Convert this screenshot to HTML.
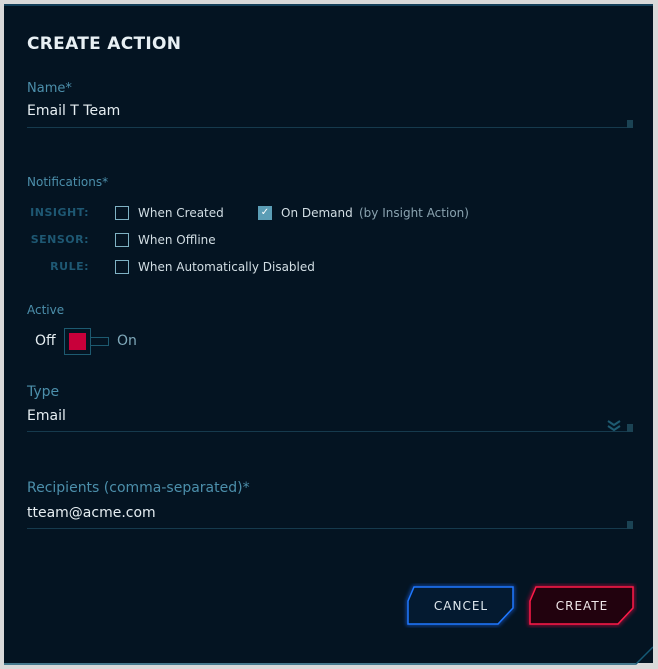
<!DOCTYPE html>
<html><head><style>
*{margin:0;padding:0;box-sizing:border-box}
body{width:658px;height:669px;background:#d9d9d9;font-family:"DejaVu Sans","Liberation Sans",sans-serif;position:relative;overflow:hidden}
.panel{position:absolute;left:4px;top:4px;width:649px;height:659px;background:#041422;border-top:2px solid #14405a}
.a{position:absolute;white-space:nowrap}
.lbl{color:#4c8fab;font-size:13px}
.val{color:#e6eef2;font-size:14px}
.line{position:absolute;left:23px;width:606px;height:1px;background:#163a4d}
.sq{position:absolute;width:6px;height:8px;background:#1b4354}
.cat{color:#1e5873;font-size:11px;font-weight:bold;letter-spacing:.5px;text-align:right;width:62px}
.cb{position:absolute;width:14px;height:14px;border:1px solid #7fb2c4}
.ct{color:#d2dee4;font-size:12px}
</style></head><body>
<div class="panel">
<div class="a" style="left:23px;top:28px;color:#e8f0f4;font-size:17px;font-weight:bold;letter-spacing:.3px">CREATE ACTION</div>
<div class="a lbl" style="left:23px;top:75px">Name*</div>
<div class="a val" style="left:23px;top:97px">Email T Team</div>
<div class="line" style="top:121px"></div><div class="sq" style="left:623px;top:114px"></div>

<div class="a lbl" style="left:23px;top:169px;font-size:12px">Notifications*</div>
<div class="a cat" style="left:23px;top:200px">INSIGHT:</div>
<div class="cb" style="left:111px;top:200px"></div>
<div class="a ct" style="left:134px;top:200px">When Created</div>
<div class="cb" style="left:254px;top:200px;background:#5b9db5;border-color:#5b9db5;color:#fff;font-size:10px;line-height:12px;text-align:center">✓</div>
<div class="a ct" style="left:277px;top:200px">On Demand</div>
<div class="a ct" style="left:355px;top:200px;color:#8aa3b0">(by Insight Action)</div>
<div class="a cat" style="left:23px;top:227px">SENSOR:</div>
<div class="cb" style="left:111px;top:227px"></div>
<div class="a ct" style="left:134px;top:227px">When Offline</div>
<div class="a cat" style="left:23px;top:254px">RULE:</div>
<div class="cb" style="left:111px;top:254px"></div>
<div class="a ct" style="left:134px;top:254px">When Automatically Disabled</div>

<div class="a lbl" style="left:23px;top:297px;font-size:12px">Active</div>
<div class="a val" style="left:31px;top:327px;font-size:14px">Off</div>
<div class="a" style="left:60px;top:322px;width:27px;height:27px;border:1px solid #1d5a70"><div style="margin:4px;width:17px;height:17px;background:#c8003a"></div></div>
<div class="a" style="left:86px;top:331px;width:19px;height:9px;border:1px solid #1d5a70"></div>
<div class="a" style="left:113px;top:327px;color:#7fa9ba;font-size:14px">On</div>

<div class="a lbl" style="left:23px;top:378px;font-size:14px">Type</div>
<div class="a val" style="left:23px;top:402px">Email</div>
<svg class="a" style="left:603px;top:414px" width="14" height="12"><path d="M1 1l6 4 6-4M1 6l6 4 6-4" stroke="#1e5a70" stroke-width="2" fill="none"/></svg>
<div class="line" style="top:425px"></div><div class="sq" style="left:623px;top:418px"></div>

<div class="a lbl" style="left:23px;top:474px;font-size:14px">Recipients (comma-separated)*</div>
<div class="a val" style="left:23px;top:499px">tteam@acme.com</div>
<div class="line" style="top:522px"></div><div class="sq" style="left:623px;top:515px"></div>

<svg class="a" style="left:393px;top:574px" width="240" height="50">
<defs><filter id="g"><feGaussianBlur stdDeviation="2"/></filter></defs>
<path d="M17 7H116V28L101 44H11V21Z" fill="none" stroke="#1a6cff" stroke-width="3" filter="url(#g)" opacity=".7"/>
<path d="M17 7H116V28L101 44H11V21Z" fill="#041a30" stroke="#1f78ff" stroke-width="1.5"/>
<path d="M139 7H236V28L221 44H133V21Z" fill="none" stroke="#ff1040" stroke-width="3" filter="url(#g)" opacity=".7"/>
<path d="M139 7H236V28L221 44H133V21Z" fill="#22020e" stroke="#ff1a48" stroke-width="1.5"/>
<text x="64" y="30" text-anchor="middle" fill="#dfe8ee" font-size="12" font-family="DejaVu Sans" letter-spacing="1">CANCEL</text>
<text x="185" y="30" text-anchor="middle" fill="#f0e8ea" font-size="12" font-family="DejaVu Sans" letter-spacing="1">CREATE</text>
</svg>
<svg class="a" style="left:0;top:640px" width="649" height="19"><path d="M0 18H632L649 1" stroke="#155a75" stroke-width="1.5" fill="none"/></svg>
</div>
</body></html>
